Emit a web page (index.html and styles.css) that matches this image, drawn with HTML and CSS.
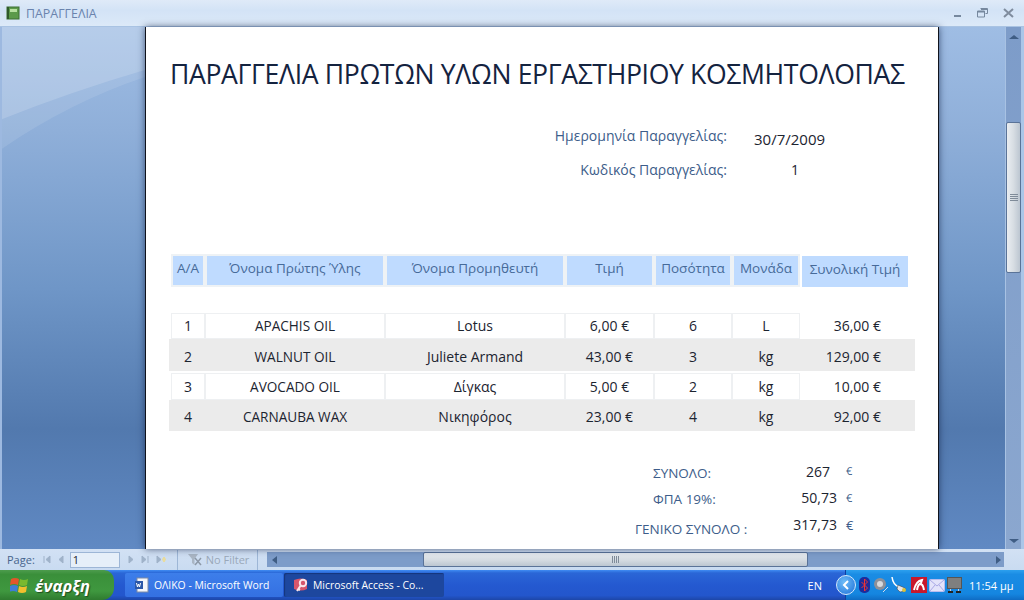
FILE: index.html
```html
<!DOCTYPE html>
<html lang="el">

<head>
    <meta charset="UTF-8">
    <title>ΠΑΡΑΓΓΕΛΙΑ</title>
    <link rel="stylesheet" href="styles.css">
</head>

<body>
    <div class="window">
        <!-- title bar of the report window -->
        <div class="title-bar">
            <svg class="report-icon" width="14" height="14" viewBox="0 0 14 14">
                <rect x="1" y="1" width="12" height="12" fill="#5c9a4a" stroke="#3d6e33" />
                <rect x="1" y="1" width="2" height="12" fill="#2f5a2b" />
                <rect x="4" y="3" width="7" height="3" fill="#b7e0a0" />
            </svg>
            <span class="title-text">ΠΑΡΑΓΓΕΛΙΑ</span>
            <div class="window-buttons">
                <svg width="9" height="10" viewBox="0 0 9 10"><rect x="1" y="7" width="7" height="2" fill="#76889e" /></svg>
                <svg width="11" height="10" viewBox="0 0 11 10"><path d="M3.5 .5h7v5h-2M.5 3h7v6h-7z" fill="none" stroke="#76889e" /><rect x="1" y="3" width="6" height="1.5" fill="#76889e" /><rect x="4" y="0.5" width="6" height="1.5" fill="#76889e" /></svg>
                <svg width="11" height="10" viewBox="0 0 11 10"><path d="M1 1l9 8M10 1l-9 8" stroke="#7f8c9e" stroke-width="2" /></svg>
            </div>
        </div>

        <div class="workspace">
            <div class="side side-left">
                <svg class="swoosh" width="145" height="130" viewBox="0 0 145 130">
                    <path d="M0 0H145V43Q70 65 0 93Z" fill="#fff" fill-opacity=".24" />
                    <path d="M0 93Q70 65 145 43V50Q70 75 0 123Z" fill="#fff" fill-opacity=".1" />
                </svg>
            </div>

            <!-- the report page -->
            <div class="report">
                <h1 class="report-title">ΠΑΡΑΓΓΕΛΙΑ ΠΡΩΤΩΝ ΥΛΩΝ ΕΡΓΑΣΤΗΡΙΟΥ ΚΟΣΜΗΤΟΛΟΠΑΣ</h1>

                <div class="order-info">
                    <div class="info-label">Ημερομηνία Παραγγελίας:</div>
                    <div class="info-value">30/7/2009</div>
                    <div class="info-label">Κωδικός Παραγγελίας:</div>
                    <div class="info-value info-code">1</div>
                </div>

                <div class="table-head">
                    <div class="head-cell">Α/Α</div>
                    <div class="head-cell">Όνομα Πρώτης Ύλης</div>
                    <div class="head-cell">Όνομα Προμηθευτή</div>
                    <div class="head-cell">Τιμή</div>
                    <div class="head-cell">Ποσότητα</div>
                    <div class="head-cell">Μονάδα</div>
                    <div class="head-cell head-total">Συνολική Τιμή</div>
                </div>

                <div class="table-rows">
                    <div class="row row-white row-first">
                        <div class="cell">1</div>
                        <div class="cell cell-caps">APACHIS OIL</div>
                        <div class="cell">Lotus</div>
                        <div class="cell">6,00 €</div>
                        <div class="cell">6</div>
                        <div class="cell">L</div>
                        <div class="cell cell-total">36,00 €</div>
                    </div>
                    <div class="row row-grey row-second">
                        <div class="cell">2</div>
                        <div class="cell cell-caps">WALNUT OIL</div>
                        <div class="cell">Juliete Armand</div>
                        <div class="cell">43,00 €</div>
                        <div class="cell">3</div>
                        <div class="cell">kg</div>
                        <div class="cell cell-total">129,00 €</div>
                    </div>
                    <div class="row row-white row-third">
                        <div class="cell">3</div>
                        <div class="cell cell-caps">AVOCADO OIL</div>
                        <div class="cell">Δίγκας</div>
                        <div class="cell">5,00 €</div>
                        <div class="cell">2</div>
                        <div class="cell">kg</div>
                        <div class="cell cell-total">10,00 €</div>
                    </div>
                    <div class="row row-grey row-fourth">
                        <div class="cell">4</div>
                        <div class="cell cell-caps">CARNAUBA WAX</div>
                        <div class="cell">Νικηφόρος</div>
                        <div class="cell">23,00 €</div>
                        <div class="cell">4</div>
                        <div class="cell">kg</div>
                        <div class="cell cell-total">92,00 €</div>
                    </div>
                </div>

                <div class="totals">
                    <div class="total-row">
                        <div class="total-label total-indent">ΣΥΝΟΛΟ:</div>
                        <div class="total-value total-short">267</div>
                        <div class="total-euro">€</div>
                    </div>
                    <div class="total-row">
                        <div class="total-label total-indent">ΦΠΑ 19%:</div>
                        <div class="total-value">50,73</div>
                        <div class="total-euro euro-mid">€</div>
                    </div>
                    <div class="total-row total-row-grand">
                        <div class="total-label total-grand">ΓΕΝΙΚΟ ΣΥΝΟΛΟ :</div>
                        <div class="total-value value-grand">317,73</div>
                        <div class="total-euro euro-grand">€</div>
                    </div>
                </div>
            </div>

            <div class="side side-right"></div>

            <!-- vertical scrollbar -->
            <div class="v-scroll">
                <div class="v-arrow"></div>
                <div class="v-thumb"><div class="grip-h"></div></div>
                <div class="v-arrow v-arrow-down"></div>
            </div>
            <div class="edge"></div>
        </div>

        <!-- record navigation and horizontal scrollbar -->
        <div class="status-bar">
            <span class="page-label">Page:</span>
            <div class="nav-icons">
                <svg width="8" height="9" viewBox="0 0 8 9"><path d="M1 1v7M7 1L3 4.5 7 8z" fill="#9fb2c9" stroke="#9fb2c9" /></svg>
                <svg class="nav-gap" width="6" height="9" viewBox="0 0 6 9"><path d="M5 1L1 4.5 5 8z" fill="#9fb2c9" stroke="#9fb2c9" /></svg>
            </div>
            <div class="page-input">1</div>
            <div class="nav-icons nav-right">
                <svg width="6" height="9" viewBox="0 0 6 9"><path d="M1 1l4 3.5L1 8z" fill="#9fb2c9" stroke="#9fb2c9" /></svg>
                <svg width="8" height="9" viewBox="0 0 8 9"><path d="M7 1v7M1 1l4 3.5L1 8z" fill="#9fb2c9" stroke="#9fb2c9" /></svg>
                <svg width="11" height="9" viewBox="0 0 11 9"><path d="M1 1l4 3.5L1 8z" fill="#9fb2c9" stroke="#9fb2c9" /><path d="M8 2v5M6 4.5h4" stroke="#e8dca0" stroke-width="2" /></svg>
            </div>
            <div class="filter">
                <svg width="15" height="14" viewBox="0 0 15 14"><path d="M1 1h10L7.5 6v6L5 10V6z" fill="#aab6c4" /><path d="M8 5l6 7M14 5l-6 7" stroke="#8d99a8" stroke-width="1.5" /></svg>
                <span>No Filter</span>
            </div>
            <div class="h-scroll">
                <div class="h-arrow h-arrow-left"></div>
                <div class="h-track">
                    <div class="h-thumb"><div class="grip-v"></div></div>
                </div>
                <div class="h-arrow h-arrow-right"></div>
            </div>
        </div>

        <!-- windows taskbar -->
        <div class="taskbar">
            <div class="start-button">
                <svg width="19" height="18" viewBox="0 0 19 18">
                    <path d="M1 3q4-2 8 0l-1 6q-4-2-8 0z" fill="#e2562a" />
                    <path d="M10 3q4 2 8 0l-1 6q-4 2-8 0z" fill="#7ab92f" />
                    <path d="M0 10q4-2 8 0l-1 6q-4-2-8 0z" fill="#3e7dd6" />
                    <path d="M9 10q4 2 8 0l-1 6q-4 2-8 0z" fill="#f2bf2e" />
                </svg>
                <span class="start-text">έναρξη</span>
            </div>
            <div class="task-list">
                <div class="task">
                    <svg width="16" height="16" viewBox="0 0 16 16">
                        <rect x="3" y="1" width="11" height="14" fill="#f4f6fb" stroke="#7d8aa5" />
                        <rect x="1" y="4" width="8" height="8" fill="#2b57a8" />
                        <path d="M2.5 6l1 4 1-3 1 3 1-4" fill="none" stroke="#fff" />
                    </svg>
                    <span>ΟΛΙΚΟ - Microsoft Word</span>
                </div>
                <div class="task task-active">
                    <svg width="16" height="16" viewBox="0 0 16 16">
                        <path d="M1 3q7-3 13 0v9q-6 3-13 0z" fill="#d8566c" />
                        <circle cx="10" cy="6" r="3.2" fill="none" stroke="#fbe6ea" stroke-width="2" />
                        <path d="M8 8l-4 6M5 12l2 1" fill="none" stroke="#fbe6ea" stroke-width="2" />
                    </svg>
                    <span>Microsoft Access - Co...</span>
                </div>
            </div>
            <span class="lang">EN</span>
            <div class="tray">
                <div class="tray-toggle">
                    <svg width="8" height="10" viewBox="0 0 8 10"><path d="M6 1L2 5l4 4" fill="none" stroke="#fff" stroke-width="2" /></svg>
                </div>
                <div class="tray-icons">
                    <svg width="13" height="16" viewBox="0 0 13 16"><rect x="1" y="0" width="11" height="16" rx="5" fill="#1c2c9c" /><path d="M3.5 5l6 6-3 3V2l3 3-6 6" fill="none" stroke="#e33" /></svg>
                    <svg width="16" height="16" viewBox="0 0 16 16"><circle cx="7" cy="7" r="6" fill="#8d9099" /><circle cx="7" cy="7" r="3" fill="#d8dade" /><path d="M10 15l5-5" stroke="#d5dde8" /></svg>
                    <svg width="18" height="16" viewBox="0 0 18 16"><path d="M1 0q1 8 7 10" fill="none" stroke="#fff" stroke-width="1.5" /><path d="M7 8l7 3v3l-5 1-3-3z" fill="#e2e4e8" stroke="#333" stroke-width=".5" /><circle cx="13" cy="13" r="2" fill="#d9c23a" /></svg>
                    <svg width="16" height="16" viewBox="0 0 16 16"><rect width="16" height="16" fill="#c9182c" /><path d="M3 13q2-9 8-10l-1 3q-3 1-4 7M8 7q4-1 5 6" fill="none" stroke="#fff" stroke-width="2" /></svg>
                    <svg width="16" height="13" viewBox="0 0 16 13"><rect x=".5" y=".5" width="15" height="12" rx="1" fill="#e3e3fa" stroke="#b9bcef" /><path d="M1 1l7 6 7-6M1 12l5-6M15 12l-5-6" fill="none" stroke="#a9a9e6" /></svg>
                    <svg width="15" height="17" viewBox="0 0 15 17"><rect x=".5" y=".5" width="14" height="11" fill="#7f7f7f" stroke="#555" /><rect x="1" y="14" width="5" height="2" fill="#222" /><rect x="9" y="14" width="5" height="2" fill="#222" /><path d="M3.5 12v2M11.5 12v2" stroke="#ccd" /></svg>
                </div>
                <span class="clock">11:54 μμ</span>
            </div>
        </div>
    </div>
</body>

</html>
```

FILE: styles.css
```css
html,
body {
    margin: 0;
    padding: 0;
    height: 100%;
    overflow: hidden;
}

body {
    font-family: "Open Sans", "Noto Sans", sans-serif;
}

.window {
    display: flex;
    flex-direction: column;
    width: 1024px;
    height: 600px;
}

/* title bar */
.title-bar {
    display: flex;
    align-items: center;
    flex: 0 0 27px;
    box-sizing: border-box;
    padding-left: 6px;
    background: linear-gradient(#dfeaf8, #d3e3f6 40%, #dce9f8);
    border-bottom: 1px solid #a9c3e3;
}

.title-text {
    margin-left: 6px;
    font-size: 12.4px;
    color: #6a83ad;
}

.window-buttons {
    display: flex;
    align-items: center;
    gap: 15px;
    margin-left: auto;
    margin-right: 10px;
}

/* main area */
.workspace {
    display: flex;
    flex: 0 0 522px;
    min-height: 0;
}

.side {
    background: linear-gradient(#9fbde4 0, #8fafd9 20%, #6f96c7 50%, #5279ae 77%, #6089c3 100%);
}

.side-left {
    flex: 0 0 145px;
    box-sizing: border-box;
    border-left: 2px solid #9db9e0;
    position: relative;
    overflow: hidden;
}

.swoosh {
    position: absolute;
    top: 0;
    left: -2px;
}

.report {
    flex: 0 0 794px;
    box-sizing: border-box;
    padding: 31px 0 0 25px;
    background: #fff;
    border-left: 1px solid #10131c;
    border-right: 1px solid #10131c;
    box-shadow: 0 0 7px rgba(20, 35, 70, .7);
    position: relative;
    color: #1c2430;
    font-size: 14px;
}

.report-title {
    margin: 0 0 0 -1px;
    font-size: 26.6px;
    font-weight: 400;
    line-height: 32px;
    letter-spacing: -.35px;
    white-space: nowrap;
    color: #14233f;
}

.order-info {
    display: grid;
    grid-template-columns: 556px 110px;
    grid-auto-rows: 34px;
    margin-top: 33px;
}

.info-label {
    text-align: right;
    color: #3d5d8a;
    line-height: 26px;
}

.info-value {
    padding-left: 27px;
    font-size: 15px;
    line-height: 33px;
}

.info-code {
    padding-left: 64px;
    font-size: 14px;
    line-height: 26px;
}

/* table */
.table-head,
.row {
    display: grid;
    grid-template-columns: 34px 180px 180px 89px 78px 68px 1fr;
}

.table-head {
    width: 737px;
    height: 33px;
    margin-top: 63px;
    font-size: 13.5px;
}

.head-cell {
    box-sizing: border-box;
    height: 33px;
    background: #bfdbff;
    border: 2px solid #eef2f5;
    color: #466a99;
    line-height: 25px;
    text-align: center;
    white-space: nowrap;
}

.head-total {
    height: 31px;
    margin-top: 2px;
    margin-left: 2px;
    border: 0;
    line-height: 26px;
}

.table-rows {
    width: 746px;
    margin-top: 26px;
    margin-left: -2px;
}

.row {
    padding-left: 2px;
    box-sizing: border-box;
    text-align: center;
    white-space: nowrap;
}

.row-first {
    height: 26px;
    line-height: 26px;
}

.row-second {
    height: 32px;
    line-height: 36px;
}

.row-third {
    height: 27px;
    margin-top: 2px;
    line-height: 27px;
}

.row-fourth {
    height: 31px;
    line-height: 34px;
}

.row-grey {
    background: #ebebeb;
}

.row-white .cell {
    box-shadow: inset 0 0 0 1px #eef0f2;
}

.row-white .cell-total {
    box-shadow: none;
}

.cell-caps {
    font-size: 13.6px;
}

.cell-total {
    padding-right: 34px;
    text-align: right;
}

/* totals */
.totals {
    margin-top: 29px;
    margin-left: 464px;
    font-size: 13.5px;
    white-space: nowrap;
}

.total-row {
    display: grid;
    grid-template-columns: 120px 82px 29px;
    height: 26px;
}

.total-row-grand {
    height: 34px;
}

.total-label {
    color: #3d5d8a;
    line-height: 26px;
}

.total-indent {
    padding-left: 18px;
}

.total-grand {
    line-height: 34px;
}

.total-value {
    font-size: 14px;
    line-height: 24px;
    text-align: right;
}

.total-short {
    padding-right: 7px;
}

.value-grand {
    line-height: 26px;
}

.total-euro {
    padding-left: 9px;
    font-size: 11px;
    line-height: 22px;
    color: #3d5d8a;
}

.euro-mid {
    line-height: 24px;
}

.euro-grand {
    font-size: 13px;
    line-height: 26px;
}

/* scrollbars */
.side-right {
    flex: 0 0 66px;
}

.v-scroll {
    display: flex;
    flex-direction: column;
    flex: 0 0 16px;
    background: linear-gradient(#7d9cc9, #8ba7cf);
    border-left: 1px solid #a8c2e3;
    box-sizing: border-box;
}

.v-arrow {
    width: 0;
    height: 0;
    margin: 8px auto 0;
    border-left: 5px solid transparent;
    border-right: 5px solid transparent;
    border-bottom: 4px solid #3f5d84;
}

.v-arrow-down {
    margin: auto auto 6px;
    border-top: 4px solid #3f5d84;
    border-bottom: 0;
}

.v-thumb {
    display: flex;
    align-items: center;
    justify-content: center;
    box-sizing: border-box;
    height: 151px;
    margin-top: 83px;
    background: linear-gradient(90deg, #e9edf1, #d7dde3 50%, #bcc6d1);
    border: 1px solid #5a7398;
    border-radius: 2px;
}

.grip-h {
    width: 8px;
    height: 7px;
    background: repeating-linear-gradient(#7f8b99 0 1px, transparent 1px 2px);
}

.edge {
    flex: 1;
    background: #aac6e8;
}

.status-bar {
    display: flex;
    align-items: center;
    flex: 0 0 21px;
    background: linear-gradient(#d2e1f4, #c9dbf1);
    font-size: 11px;
    color: #47648c;
}

.page-label {
    margin-left: 7px;
}

.nav-icons {
    display: flex;
    align-items: center;
    margin-left: 8px;
}

.nav-gap {
    margin-left: 7px;
}

.page-input {
    box-sizing: border-box;
    width: 50px;
    height: 16px;
    margin-left: 6px;
    padding-left: 2px;
    background: #e6eff9;
    border: 1px solid #9db6d6;
    color: #1c2430;
    line-height: 14px;
}

.nav-right {
    gap: 7px;
    margin-left: 8px;
}

.filter {
    display: flex;
    align-items: center;
    gap: 4px;
    box-sizing: border-box;
    width: 81px;
    height: 20px;
    margin-left: 10px;
    padding-left: 9px;
    border-left: 1px solid #9db6d6;
    border-right: 1px solid #9db6d6;
    color: #9aa8b9;
}

.h-scroll {
    display: flex;
    align-items: center;
    width: 737px;
    height: 15px;
    margin-left: 9px;
    background: #7d9cc9;
}

.h-arrow {
    width: 0;
    height: 0;
    border-top: 4px solid transparent;
    border-bottom: 4px solid transparent;
}

.h-arrow-left {
    flex: 0 0 0;
    margin-left: 5px;
    margin-right: 6px;
    border-right: 5px solid #3f5d84;
}

.h-arrow-right {
    flex: 0 0 0;
    margin-left: 6px;
    margin-right: 3px;
    border-left: 5px solid #3f5d84;
}

.h-track {
    display: flex;
    flex: 1;
    height: 15px;
}

.h-thumb {
    display: flex;
    align-items: center;
    justify-content: center;
    box-sizing: border-box;
    width: 385px;
    height: 15px;
    margin-left: 140px;
    background: linear-gradient(#e9edf1, #d7dde3 50%, #bcc6d1);
    border: 1px solid #5a7398;
    border-radius: 2px;
}

.grip-v {
    width: 7px;
    height: 7px;
    background: repeating-linear-gradient(90deg, #7f8b99 0 1px, transparent 1px 2px);
}

/* taskbar */
.taskbar {
    display: flex;
    align-items: center;
    flex: 1;
    background: linear-gradient(#3f8cf3 0, #2a66d6 3px, #2459d0 50%, #2356cc 85%, #1d46a8 100%);
    color: #fff;
}

.start-button {
    display: flex;
    align-items: center;
    gap: 6px;
    box-sizing: border-box;
    width: 114px;
    height: 30px;
    padding-left: 10px;
    background: linear-gradient(#4d9c4d, #3a8f3a 15%, #3f983f 70%, #2f7a2f);
    border-radius: 0 10px 12px 0;
}

.start-text {
    font-size: 16.5px;
    font-weight: 700;
    font-style: italic;
    color: #fff;
    text-shadow: 1px 1px 1px #1e4d1e;
}

.task-list {
    display: flex;
    gap: 1px;
    margin-left: 11px;
}

.task {
    display: flex;
    align-items: center;
    gap: 4px;
    box-sizing: border-box;
    width: 158px;
    height: 24px;
    padding-left: 9px;
    background: linear-gradient(#3d7eea, #3470e2);
    border-radius: 2px;
    font-size: 10.4px;
    white-space: nowrap;
}

.task-active {
    width: 160px;
    background: #1d479e;
    box-shadow: inset 1px 1px 1px #16357a;
}

.lang {
    margin-left: auto;
    margin-right: 23px;
    font-size: 11px;
}

.tray {
    display: flex;
    align-items: center;
    box-sizing: border-box;
    width: 179px;
    height: 30px;
    background: linear-gradient(#2ca0ee 0, #1a8ce4 15%, #1586e0 80%, #0f6cc4);
    border-left: 1px solid #123f9e;
}

.tray-toggle {
    display: flex;
    align-items: center;
    justify-content: center;
    flex: 0 0 18px;
    height: 18px;
    margin-left: -10px;
    background: radial-gradient(circle at 40% 35%, #6fbdf8, #1c6fd8);
    border: 1px solid #d5e9fb;
    border-radius: 50%;
}

.tray-icons {
    display: flex;
    align-items: center;
    gap: 2px;
    margin-left: 2px;
}

.clock {
    margin-left: 7px;
    font-size: 11px;
    white-space: nowrap;
}
```
